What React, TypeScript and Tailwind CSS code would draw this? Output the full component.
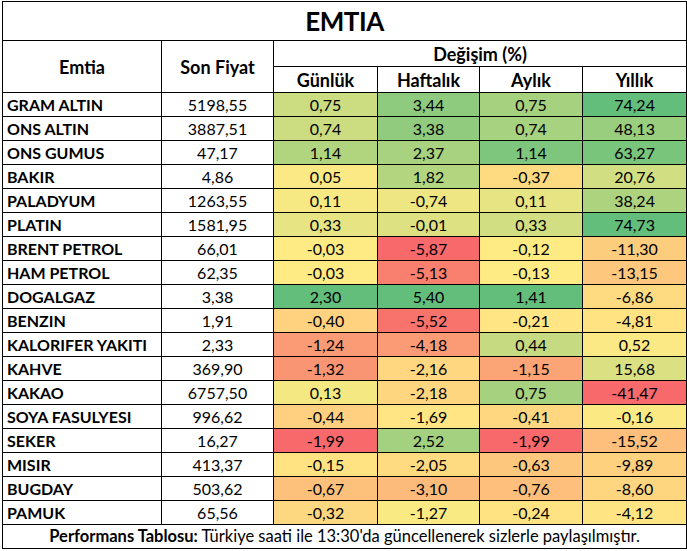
import React from 'react'

type Row = { name: string; price: string; changes: string[] }

const rows: Row[] = [
  { name: 'GRAM ALTIN', price: '5198,55', changes: ['0,75', '3,44', '0,75', '74,24'] },
  { name: 'ONS ALTIN', price: '3887,51', changes: ['0,74', '3,38', '0,74', '48,13'] },
  { name: 'ONS GUMUS', price: '47,17', changes: ['1,14', '2,37', '1,14', '63,27'] },
  { name: 'BAKIR', price: '4,86', changes: ['0,05', '1,82', '-0,37', '20,76'] },
  { name: 'PALADYUM', price: '1263,55', changes: ['0,11', '-0,74', '0,11', '38,24'] },
  { name: 'PLATIN', price: '1581,95', changes: ['0,33', '-0,01', '0,33', '74,73'] },
  { name: 'BRENT PETROL', price: '66,01', changes: ['-0,03', '-5,87', '-0,12', '-11,30'] },
  { name: 'HAM PETROL', price: '62,35', changes: ['-0,03', '-5,13', '-0,13', '-13,15'] },
  { name: 'DOGALGAZ', price: '3,38', changes: ['2,30', '5,40', '1,41', '-6,86'] },
  { name: 'BENZIN', price: '1,91', changes: ['-0,40', '-5,52', '-0,21', '-4,81'] },
  { name: 'KALORIFER YAKITI', price: '2,33', changes: ['-1,24', '-4,18', '0,44', '0,52'] },
  { name: 'KAHVE', price: '369,90', changes: ['-1,32', '-2,16', '-1,15', '15,68'] },
  { name: 'KAKAO', price: '6757,50', changes: ['0,13', '-2,18', '0,75', '-41,47'] },
  { name: 'SOYA FASULYESI', price: '996,62', changes: ['-0,44', '-1,69', '-0,41', '-0,16'] },
  { name: 'SEKER', price: '16,27', changes: ['-1,99', '2,52', '-1,99', '-15,52'] },
  { name: 'MISIR', price: '413,37', changes: ['-0,15', '-2,05', '-0,63', '-9,89'] },
  { name: 'BUGDAY', price: '503,62', changes: ['-0,67', '-3,10', '-0,76', '-8,60'] },
  { name: 'PAMUK', price: '65,56', changes: ['-0,32', '-1,27', '-0,24', '-4,12'] },
]

const num = (s: string) => parseFloat(s.replace(',', '.'))

const RED = [248, 105, 107]
const YELLOW = [255, 235, 132]
const GREEN = [99, 190, 123]

function mix(a: number[], b: number[], t: number) {
  const c = a.map((x, i) => Math.round(x + (b[i] - x) * t))
  return `rgb(${c[0]}, ${c[1]}, ${c[2]})`
}

// excel style 3-colour scale per column: min red, median yellow, max green
const scales = [0, 1, 2, 3].map((col) => {
  const vals = rows.map((r) => num(r.changes[col])).sort((a, b) => a - b)
  const n = vals.length
  const mid = n % 2 ? vals[(n - 1) / 2] : (vals[n / 2 - 1] + vals[n / 2]) / 2
  return { min: vals[0], mid, max: vals[n - 1] }
})

function cellColor(v: number, col: number) {
  const { min, mid, max } = scales[col]
  if (v <= mid) return mix(RED, YELLOW, mid === min ? 1 : (v - min) / (mid - min))
  return mix(YELLOW, GREEN, max === mid ? 1 : (v - mid) / (max - mid))
}

const cell = 'border border-black p-0'

export default function App() {
  return (
    <div className="min-h-[551px] w-[687px] bg-white pl-[2px] pt-[1px] font-['Lato',_sans-serif] text-black">
      <table className="w-[684px] table-fixed border-collapse text-[16px] leading-none">
        <colgroup>
          <col className="w-[159px]" />
          <col className="w-[112px]" />
          <col className="w-[104px]" />
          <col className="w-[102px]" />
          <col className="w-[103px]" />
          <col className="w-[104px]" />
        </colgroup>
        <thead>
          <tr className="h-[39px]">
            <th colSpan={6} className={`${cell} text-[26px] font-bold tracking-[-0.5px]`}>
              EMTIA
            </th>
          </tr>
          <tr className="h-[26px]">
            <th rowSpan={2} className={`${cell} text-[18px] font-bold`}>Emtia</th>
            <th rowSpan={2} className={`${cell} text-[18px] font-bold`}>Son Fiyat</th>
            <th colSpan={4} className={`${cell} text-[18px] font-bold`}>Değişim (%)</th>
          </tr>
          <tr className="h-[26px]">
            <th className={`${cell} text-[18px] font-bold`}>Günlük</th>
            <th className={`${cell} text-[18px] font-bold`}>Haftalık</th>
            <th className={`${cell} text-[18px] font-bold`}>Aylık</th>
            <th className={`${cell} text-[18px] font-bold`}>Yıllık</th>
          </tr>
        </thead>
        <tbody>
          {rows.map((r) => (
            <tr key={r.name} className="h-[24px]">
              <td className={`${cell} pl-[4px] text-left font-bold`}>{r.name}</td>
              <td className={`${cell} text-center`}>{r.price}</td>
              {r.changes.map((c, i) => (
                <td
                  key={i}
                  className={`${cell} text-center`}
                  style={{ backgroundColor: cellColor(num(c), i) }}
                >
                  {c}
                </td>
              ))}
            </tr>
          ))}
          <tr className="h-[24px]">
            <td colSpan={6} className={`${cell} text-center text-[16.5px]`}>
              <span className="font-bold">Performans Tablosu:</span> Türkiye saati ile 13:30'da
              güncellenerek sizlerle paylaşılmıştır.
            </td>
          </tr>
        </tbody>
      </table>
    </div>
  )
}
